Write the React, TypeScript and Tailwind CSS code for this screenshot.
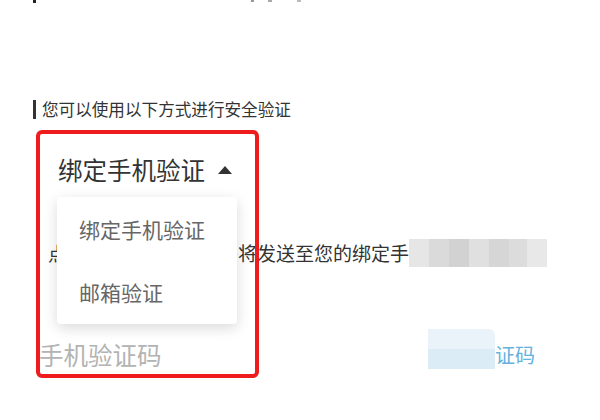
export default function App() {
  return (
    <div className="relative h-[420px] w-[600px] overflow-hidden bg-white font-['Noto_Sans_CJK_SC','Noto_Sans',sans-serif] text-[#333]">
      {/* cut-off line above */}
      <div className="flex h-[4px] items-start">
        <span className="ml-[33px] h-[3px] w-[3px] bg-[#222]" />
        <span className="ml-[215px] h-[2px] w-[3px] bg-[#999]" />
        <span className="ml-[14px] h-[2px] w-[4px] bg-[#aaa]" />
        <span className="ml-[25px] h-[2px] w-[4px] bg-[#bbb]" />
      </div>

      <div className="mt-[95px] flex items-center pl-[33px]">
        <span className="h-[19px] w-[3px] bg-[#333]" />
        <span className="ml-[6px] text-[16.6px] leading-[20px] text-[#333]">
          您可以使用以下方式进行安全验证
        </span>
      </div>

      <div className="mt-[36px] flex items-center pl-[58px]">
        <span className="text-[24.5px] leading-[30px] text-[#333]">绑定手机验证</span>
        <span className="ml-[13px] h-0 w-0 border-x-[7px] border-b-[8px] border-x-transparent border-b-[#333]" />
      </div>

      <div className="mt-[54px] flex items-center pl-[48px]">
        <span className="whitespace-nowrap text-[19px] leading-[26px] text-[#333]">
          点击获取按钮，验证码将发送至您的绑定手
        </span>
        <div className="flex h-[28px]">
          <span className="w-[20px] bg-[#e6e6e6]" />
          <span className="w-[20px] bg-[#dadada]" />
          <span className="w-[20px] bg-[#d2d2d2]" />
          <span className="w-[20px] bg-[#e0e0e0]" />
          <span className="w-[20px] bg-[#d6d6d6]" />
          <span className="w-[18px] bg-[#dcdcdc]" />
          <span className="w-[20px] bg-[#e8e8e8]" />
        </div>
      </div>

      <div className="mt-[62px] flex items-center pl-[39px]">
        <span className="text-[24.5px] leading-[30px] text-[#b3b3b3]">手机验证码</span>
        <div className="ml-auto mr-[65px] flex items-center">
          <div className="mb-[12px] flex h-[40px] w-[67px] flex-col">
            <span className="h-[20px] rounded-tr-[6px] bg-[#eaf3f9]" />
            <span className="h-[20px] bg-[#dcecf6]" />
          </div>
          <span className="text-[20px] leading-[26px] text-[#66b2dd]">证码</span>
        </div>
      </div>

      {/* dropdown menu */}
      <div className="absolute left-[57px] top-[197px] flex h-[127px] w-[180px] flex-col rounded-[4px] bg-white pl-[22px] shadow-[0_4px_14px_rgba(0,0,0,0.15)]">
        <div className="mt-[18px] text-[21px] leading-[28px] text-[#666]">绑定手机验证</div>
        <div className="mt-[35px] text-[21px] leading-[28px] text-[#666]">邮箱验证</div>
      </div>

      {/* red annotation */}
      <div className="absolute left-[36px] top-[130px] h-[248px] w-[223px] rounded-[6px] border-[4px] border-[#ee1c1c]" />
    </div>
  );
}
